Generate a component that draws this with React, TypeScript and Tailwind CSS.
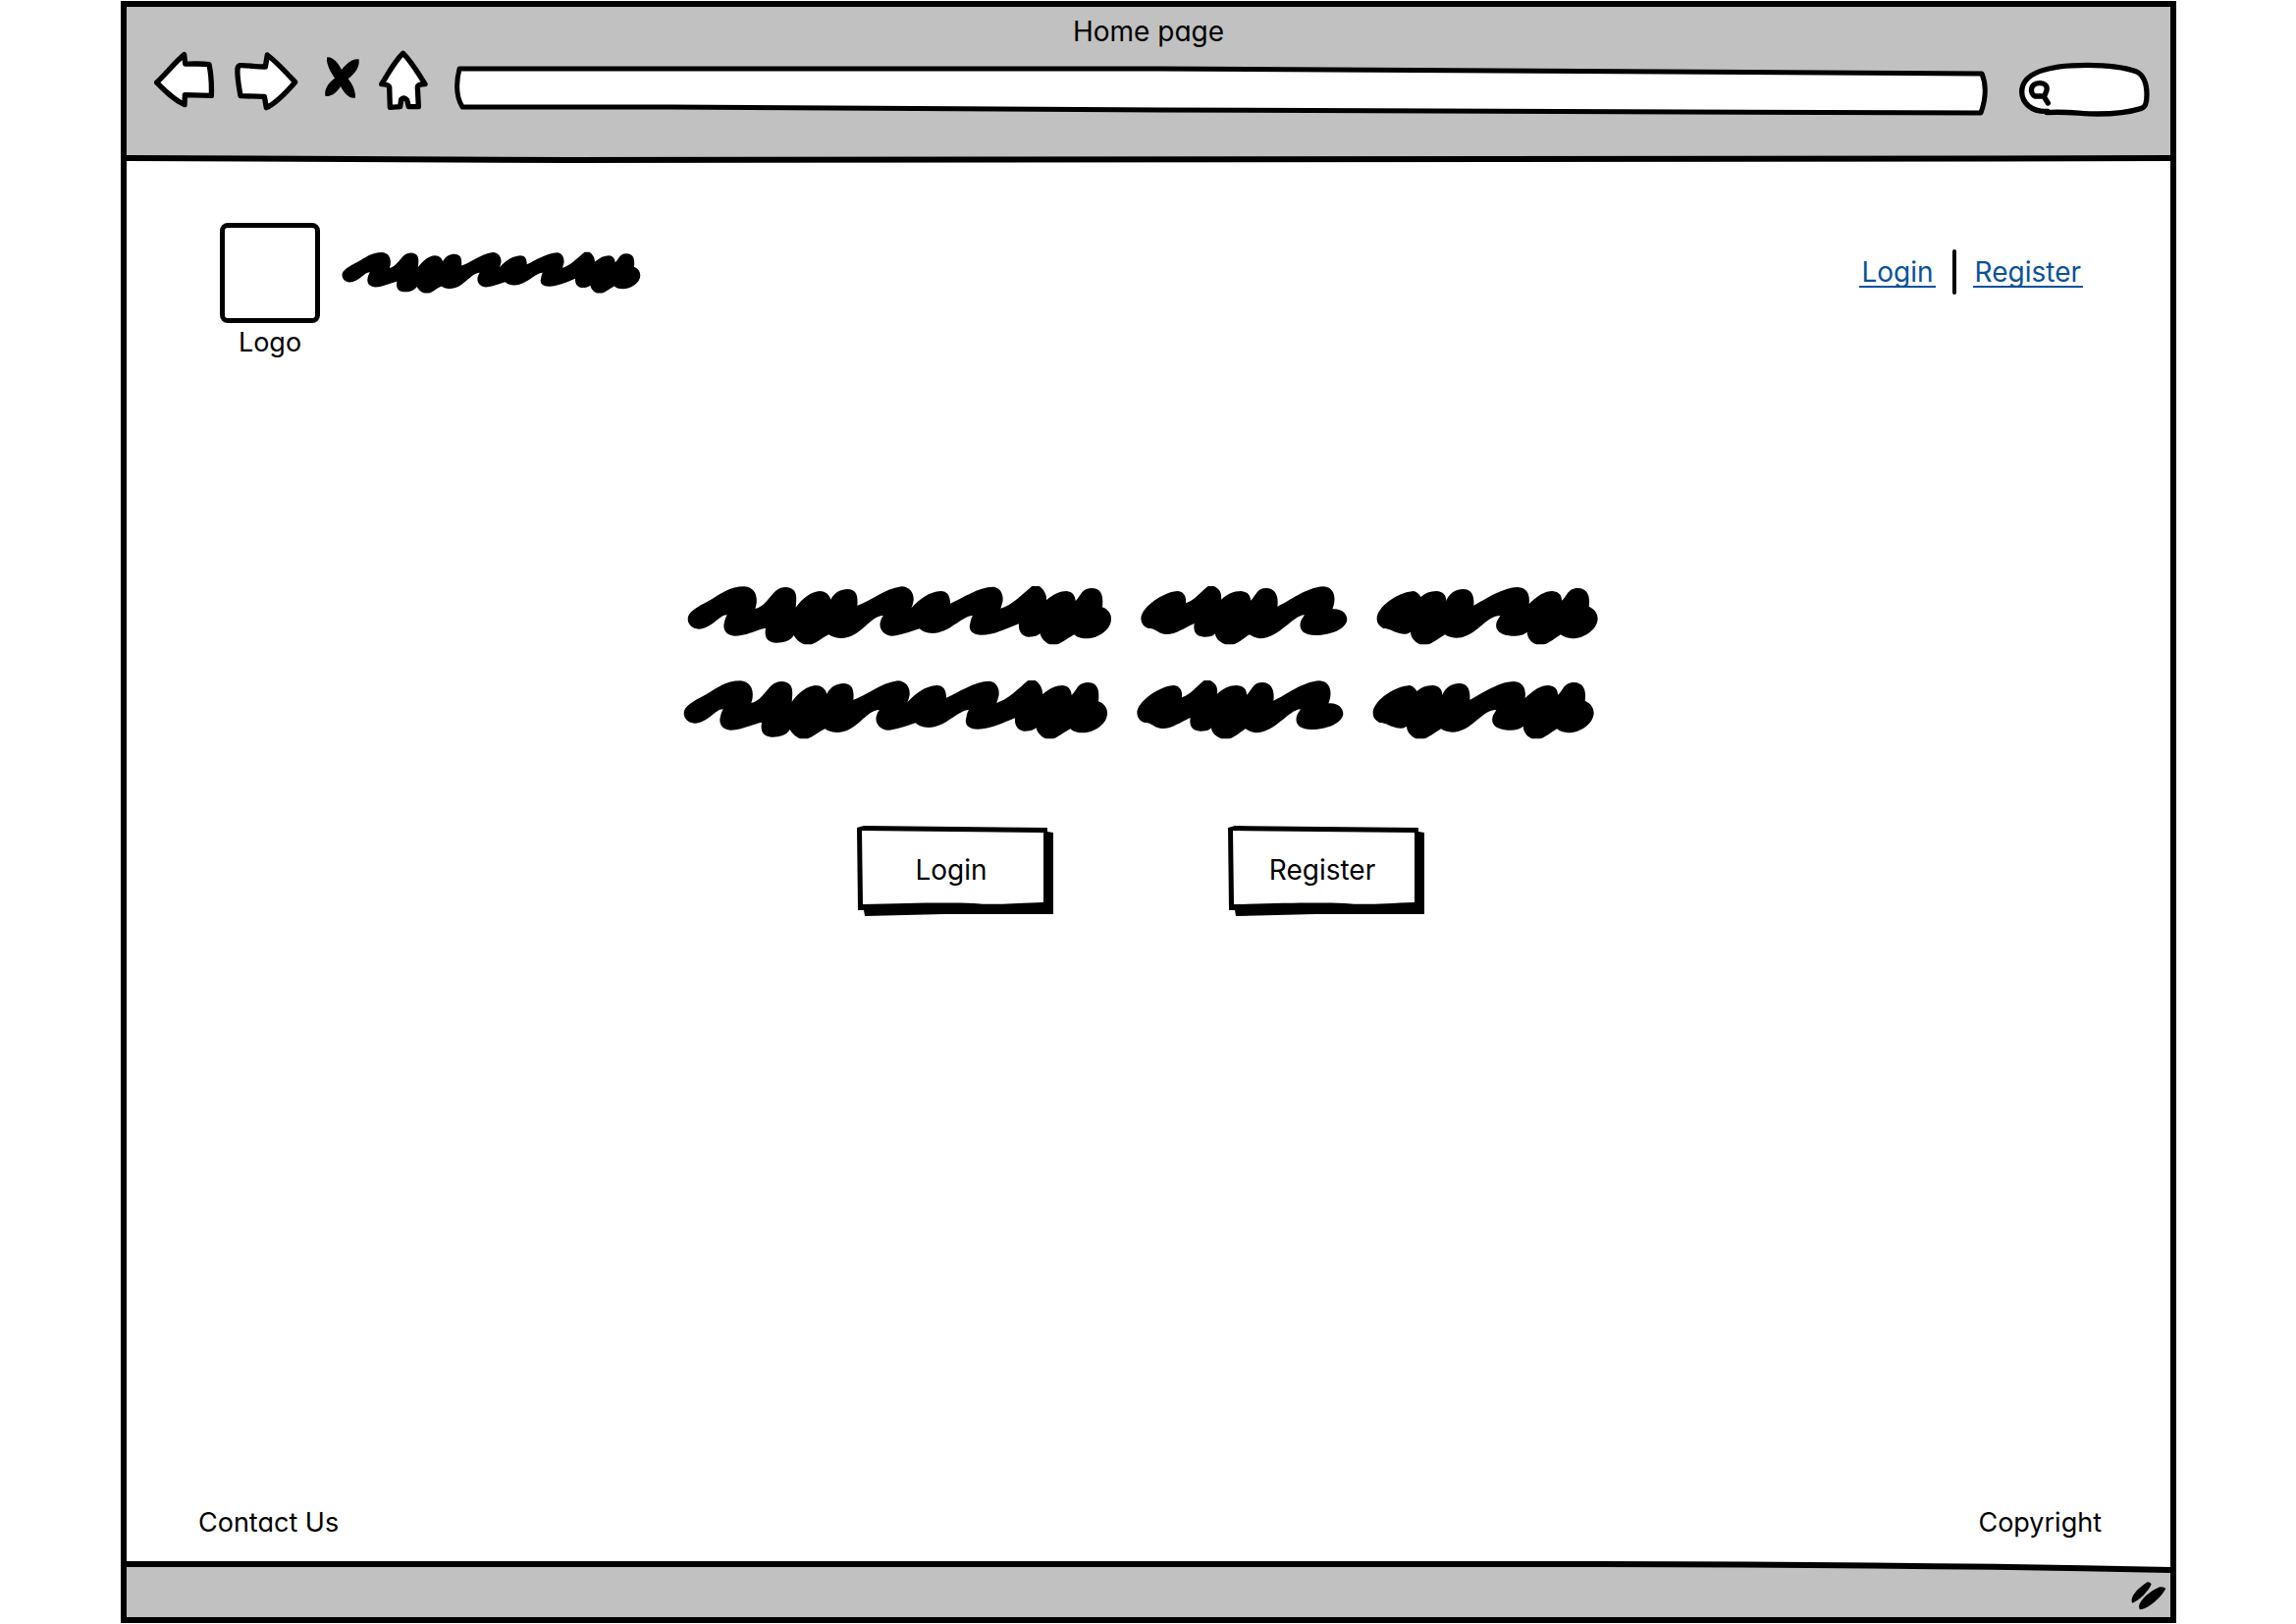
import React from "react";

const LONG =
  "M32,152 C32,130 58,116 100,94 C130,76 160,52 205,52 C238,54 250,85 238,120 C265,115 280,85 300,66 C318,50 345,50 358,66 C367,80 363,100 362,116 C385,85 410,68 435,66 C455,66 466,80 469,92 C480,70 500,60 520,60 C546,61 553,78 550,110 C590,98 630,60 685,52 C712,52 724,75 722,95 C720,105 718,112 715,118 C740,90 770,68 805,66 C825,66 834,80 834,104 C870,88 920,54 965,53 C990,55 998,80 994,100 L988,119 C1020,112 1055,75 1084,51 L1106,51 C1122,62 1130,80 1128,94 C1150,75 1170,66 1190,66 C1208,68 1216,80 1217,96 C1234,80 1235,58 1265,57 C1300,57 1302,85 1299,115 C1317,122 1326,135 1326,152 C1325,185 1285,211 1250,211 C1230,211 1220,205 1213,199 C1190,212 1170,228 1160,229 L1138,229 C1120,222 1110,205 1109,196 C1095,207 1080,206 1072,206 C1050,203 1042,185 1044,166 C1010,180 965,200 930,200 C895,200 890,180 895,165 C897,152 900,145 903,141 C870,142 830,195 780,195 C760,195 748,188 740,181 C710,190 680,203 655,203 C625,200 615,175 621,158 C624,148 627,144 630,141 C590,140 560,210 500,210 C480,210 470,203 463,199 C440,210 425,225 410,229 L388,229 C370,222 362,210 356,201 C345,220 320,225 300,224 C270,222 266,200 270,179 C240,185 210,203 175,203 C145,200 138,180 144,160 C146,150 150,143 152,139 C130,137 105,182 65,182 C45,180 33,168 32,152Z";
const MEDIUM =
  "M67,150 C67,115 140,66 180,66 C200,68 206,85 204,103 C230,95 250,68 272,51 L290,51 C310,60 314,75 312,92 C330,75 350,66 372,66 C395,68 402,80 402,95 C418,82 420,57 450,57 C480,57 488,85 484,113 C520,98 570,55 625,52 C660,55 665,90 652,121 C680,118 697,135 697,153 C695,180 650,201 600,201 C560,201 545,180 558,152 L567,139 C530,140 490,211 430,211 C415,209 405,203 398,199 C380,212 360,228 348,229 L325,229 C305,222 294,208 294,196 C285,207 270,206 260,206 C235,205 226,190 230,165 C200,178 175,198 145,198 C120,198 112,178 90,180 C75,175 68,165 67,150Z";
const WIDE =
  "M788,150 C788,115 850,70 900,66 C910,68 918,76 922,84 C935,72 950,66 970,66 C990,68 1000,78 1000,96 C1008,75 1025,60 1052,60 C1078,60 1086,80 1084,110 C1120,92 1170,55 1218,54 C1250,56 1256,80 1253,105 C1280,80 1300,66 1325,66 C1345,68 1353,80 1353,95 C1368,85 1370,57 1402,57 C1435,58 1440,85 1436,113 C1455,122 1463,135 1463,152 C1460,185 1420,211 1385,211 C1370,210 1358,205 1350,199 C1330,212 1310,228 1298,229 L1275,229 C1258,222 1248,208 1247,191 C1235,203 1215,203 1200,203 C1165,202 1145,185 1155,158 L1165,141 C1120,140 1090,209 1030,209 C1015,208 1003,204 996,199 C975,212 955,228 943,229 L920,229 C902,220 892,208 891,191 C875,202 860,196 850,193 C835,188 825,180 808,180 C795,172 788,165 788,150Z";

function Scribbles({ className }: { className: string }) {
  return (
    <div className={`flex gap-[29px] ${className}`} aria-hidden="true">
      <svg className="h-[61px] w-[433px]" viewBox="30 48 1299 183">
        <path d={LONG} />
      </svg>
      <svg className="h-[61px] w-[211px]" viewBox="66 48 633 183">
        <path d={MEDIUM} />
      </svg>
      <svg className="h-[61px] w-[227px]" viewBox="786 48 681 183">
        <path d={WIDE} />
      </svg>
    </div>
  );
}

const stroke = {
  fill: "#fff",
  stroke: "#000",
  strokeWidth: 16,
  strokeLinejoin: "round" as const,
  strokeLinecap: "round" as const,
};

function BrowserBar() {
  return (
    <header className="relative flex h-[155px] flex-col bg-[#c1c1c1]">
      <h1 className="pt-[9px] text-center">Home page</h1>
      <div className="flex items-start gap-[25px] pr-5 pl-[27px]">
        <nav className="flex gap-[18px]" aria-label="Browser">
          <button type="button" aria-label="Back">
            <svg className="h-[72px] w-16" viewBox="138 144 192 216" {...stroke}>
              <path d="M233,167 L236,195 C262,196 285,193 309,197 C315,225 317,262 316,292 L235,290 L234,320 C200,304 175,278 149,252 C178,225 203,192 233,167Z" />
            </svg>
          </button>
          <button type="button" aria-label="Forward">
            <svg className="h-[72px] w-[66px]" viewBox="384 144 198 216" {...stroke}>
              <path d="M487,168 C516,190 545,222 572,251 C545,282 516,314 484,329 L478,295 L405,293 C400,262 394,235 396,210 Q397,202 404,200 C430,199 455,205 481,204Z" />
            </svg>
          </button>
          <button type="button" aria-label="Stop">
            <svg className="h-[72px] w-[45px]" viewBox="636 144 135 216">
              <path d="M669,175 C685,172 703,190 714,213 C730,193 748,178 767,181 C770,205 755,225 734,241 C748,258 757,278 756,299 C738,303 722,285 711,264 C700,282 682,297 664,293 C661,270 674,253 693,239 C680,219 667,198 669,175Z" />
            </svg>
          </button>
          <button type="button" aria-label="Home">
            <svg className="h-[72px] w-[52px]" viewBox="825 144 156 216" {...stroke}>
              <path d="M902,163 C927,188 949,224 969,257 Q946,257 946,266 L949,326 L919,326 L914,306 Q905,295 896,304 L893,326 L862,328 L860,266 Q858,258 836,257 C856,226 876,187 902,163Z" />
            </svg>
          </button>
        </nav>
        <div className="relative h-[72px] flex-1">
          <svg
            className="absolute inset-0 h-full w-full"
            viewBox="0 0 1563 72"
            preserveAspectRatio="none"
            {...stroke}
            strokeWidth={5}
          >
            <path d="M6,22 L720,22 L1557,27 Q1564,44 1556,67 L720,64 L220,61 L9,61 Q0,46 6,22Z" />
          </svg>
          <input
            aria-label="Address"
            className="relative mt-6 block h-9 w-full bg-transparent px-4 outline-none"
          />
        </div>
        <div className="relative h-[72px] w-[141px]">
          <svg className="absolute inset-0 h-full w-full" viewBox="270 144 423 216" {...stroke}>
            <path d="M378,340 C330,343 299,315 299,280 C300,215 400,199 500,199 C570,199 620,208 650,219 C675,232 681,265 681,290 C681,315 675,328 665,331 C620,345 580,348 530,348 C480,348 430,339 375,344" />
            <path d="M352,254 C368,252 378,262 375,276 L368,294 L340,294 C322,285 324,256 352,254Z M367,296 L379,315" />
          </svg>
          <input
            type="search"
            aria-label="Search"
            className="relative mt-6 block h-9 w-full bg-transparent pr-4 pl-12 outline-none"
          />
        </div>
      </div>
      <svg
        className="absolute inset-x-0 -bottom-2 h-4 w-full"
        viewBox="0 0 2082 16"
        preserveAspectRatio="none"
        aria-hidden="true"
      >
        <path d="M0,7 C150,9 300,9 450,9 C900,10 1500,9 2082,7 V0 H0Z" fill="#c1c1c1" />
        <path
          d="M0,7 C150,9 300,9 450,9 C900,10 1500,9 2082,7"
          fill="none"
          stroke="#000"
          strokeWidth="6"
        />
      </svg>
    </header>
  );
}

function StatusBar() {
  return (
    <div className="relative flex h-[54px] items-center justify-end pr-1">
      <svg
        className="absolute inset-0 h-full w-full overflow-visible"
        viewBox="0 0 2082 54"
        preserveAspectRatio="none"
        aria-hidden="true"
      >
        <path d="M0,0 C300,2 900,0 1500,0 Q1800,0 2082,6 V54 H0Z" fill="#c1c1c1" />
        <path
          d="M0,0 C300,2 900,0 1500,0 Q1800,0 2082,6"
          fill="none"
          stroke="#000"
          strokeWidth="6"
        />
      </svg>
      <svg className="relative mt-2.5 h-[30px] w-9" viewBox="630 274 108 90" aria-hidden="true">
        <path d="M680,278 Q688,277 692,284 C684,305 655,335 634,342 C622,322 660,290 680,278Z" />
        <path d="M718,293 Q729,291 736,297 C724,322 685,358 657,362 C642,342 690,303 718,293Z" />
      </svg>
    </div>
  );
}

function SketchButton({ children }: { children: React.ReactNode }) {
  return (
    <button type="button" className="relative h-[92px] w-[202px] pr-2 pb-0.5">
      <svg
        className="absolute inset-0 h-full w-full"
        viewBox="0 0 202 92"
        preserveAspectRatio="none"
        aria-hidden="true"
      >
        <path d="M1,2 L8,0 L195,2 V6 L201,7 V90 L90,90 L9,92 L8,86 L2,86Z" />
        <path fill="#fff" d="M6,5 L191,7 V78 C160,79 140,81 120,79 C90,78 50,79 7,80Z" />
      </svg>
      <span className="relative">{children}</span>
    </button>
  );
}

const linkClass = "block h-8 border-b-2 border-[#0a5299] px-0.5 text-[#0a5299]";

export default function App() {
  return (
    <div className="flex min-h-screen flex-col bg-white py-px pr-[122px] pl-[123px] font-['Inter',sans-serif] text-[28px] leading-8 text-black [font-feature-settings:'cv11']">
      <div className="flex flex-1 flex-col border-[6px] border-black">
        <BrowserBar />
        <main className="flex flex-1 flex-col">
          <div className="flex justify-between pt-[65px] pr-[89px] pl-[95px]">
            <div className="flex gap-[22px]">
              <div className="flex flex-col items-center gap-1">
                <div className="size-[102px] rounded-lg border-[5px] border-black" />
                <span className="text-[27px]">Logo</span>
              </div>
              <svg
                className="mt-[29px] h-[43px] w-[305px]"
                viewBox="30 48 1299 183"
                aria-hidden="true"
              >
                <path d={LONG} />
              </svg>
            </div>
            <nav className="mt-[27px] flex h-[46px] items-center gap-[17px]" aria-label="Account">
              <a href="#login" className={linkClass}>
                Login
              </a>
              <span className="h-[46px] w-1 rounded-full bg-black" />
              <a href="#register" className={linkClass}>
                Register
              </a>
            </nav>
          </div>
          <section className="mt-[231px] flex flex-col items-center pr-4">
            <Scribbles className="pl-1" />
            <Scribbles className="mt-[35px] pr-1" />
            <div className="mt-[88px] flex gap-44">
              <SketchButton>Login</SketchButton>
              <SketchButton>Register</SketchButton>
            </div>
          </section>
          <footer className="mt-auto flex justify-between pr-[70px] pb-[26px] pl-[73px] text-[27px]">
            <a href="#contact">Contact Us</a>
            <span>Copyright</span>
          </footer>
        </main>
        <StatusBar />
      </div>
    </div>
  );
}
